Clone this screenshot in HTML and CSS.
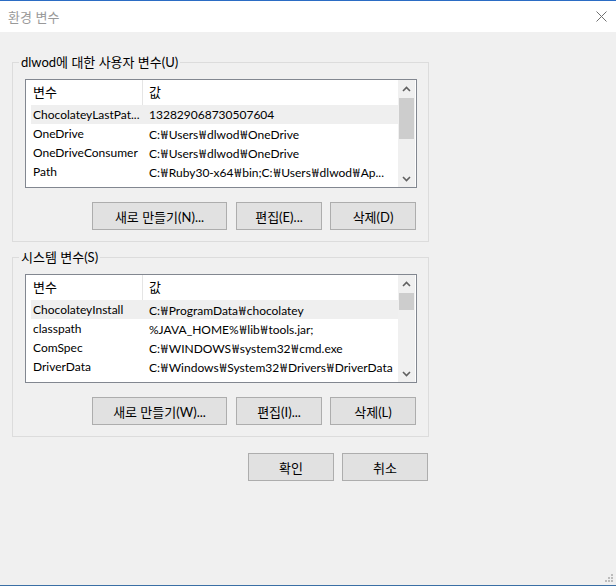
FILE: index.html
```html
<!DOCTYPE html>
<html lang="ko">
<head>
    <meta charset="UTF-8">
    <title>환경 변수</title>
    <link rel="stylesheet" href="styles.css">
</head>
<body>

    <div class="window">
        <div class="titlebar">
            <span class="title">환경 변수</span>
            <svg class="close" width="11" height="11" viewBox="0 0 11 11">
                <path d="M0.5 0.5 L10.5 10.5 M10.5 0.5 L0.5 10.5" stroke="#707070" stroke-width="1" fill="none"/>
            </svg>
        </div>

        <div class="content">
            <!-- 사용자 변수 -->
            <fieldset class="group">
                <legend>dlwod에 대한 사용자 변수(U)</legend>
                <div class="listview">
                    <div class="list-main">
                        <div class="list-header">
                            <div class="col-name">변수</div>
                            <div class="col-value">값</div>
                        </div>
                        <div class="row selected">
                            <div class="col-name">ChocolateyLastPat...</div>
                            <div class="col-value">132829068730507604</div>
                        </div>
                        <div class="row">
                            <div class="col-name">OneDrive</div>
                            <div class="col-value">C:<span class="won">₩</span>Users<span class="won">₩</span>dlwod<span class="won">₩</span>OneDrive</div>
                        </div>
                        <div class="row">
                            <div class="col-name">OneDriveConsumer</div>
                            <div class="col-value">C:<span class="won">₩</span>Users<span class="won">₩</span>dlwod<span class="won">₩</span>OneDrive</div>
                        </div>
                        <div class="row">
                            <div class="col-name">Path</div>
                            <div class="col-value">C:<span class="won">₩</span>Ruby30-x64<span class="won">₩</span>bin;C:<span class="won">₩</span>Users<span class="won">₩</span>dlwod<span class="won">₩</span>Ap...</div>
                        </div>
                    </div>
                    <div class="scrollbar">
                        <div class="arrow">
                            <svg width="9" height="6" viewBox="0 0 9 6"><polyline points="1,5 4.5,1.5 8,5" fill="none" stroke="#606060" stroke-width="1.6"/></svg>
                        </div>
                        <div class="track">
                            <div class="thumb" style="height: 41px; margin-top: 1px;"></div>
                        </div>
                        <div class="arrow">
                            <svg width="9" height="6" viewBox="0 0 9 6"><polyline points="1,1 4.5,4.5 8,1" fill="none" stroke="#606060" stroke-width="1.6"/></svg>
                        </div>
                    </div>
                </div>
                <div class="buttons">
                    <button class="btn btn-wide">새로 만들기(N)...</button>
                    <button class="btn">편집(E)...</button>
                    <button class="btn">삭제(D)</button>
                </div>
            </fieldset>

            <!-- 시스템 변수 -->
            <fieldset class="group group-system">
                <legend>시스템 변수(S)</legend>
                <div class="listview">
                    <div class="list-main">
                        <div class="list-header">
                            <div class="col-name">변수</div>
                            <div class="col-value">값</div>
                        </div>
                        <div class="row selected">
                            <div class="col-name">ChocolateyInstall</div>
                            <div class="col-value">C:<span class="won">₩</span>ProgramData<span class="won">₩</span>chocolatey</div>
                        </div>
                        <div class="row">
                            <div class="col-name">classpath</div>
                            <div class="col-value">%JAVA_HOME%<span class="won">₩</span>lib<span class="won">₩</span>tools.jar;</div>
                        </div>
                        <div class="row">
                            <div class="col-name">ComSpec</div>
                            <div class="col-value">C:<span class="won">₩</span>WINDOWS<span class="won">₩</span>system32<span class="won">₩</span>cmd.exe</div>
                        </div>
                        <div class="row">
                            <div class="col-name">DriverData</div>
                            <div class="col-value">C:<span class="won">₩</span>Windows<span class="won">₩</span>System32<span class="won">₩</span>Drivers<span class="won">₩</span>DriverData</div>
                        </div>
                        <div class="row">
                            <div class="col-name">JAVA_HOME</div>
                            <div class="col-value">C:<span class="won">₩</span>Program Files<span class="won">₩</span>Java<span class="won">₩</span>jdk-17</div>
                        </div>
                    </div>
                    <div class="scrollbar">
                        <div class="arrow">
                            <svg width="9" height="6" viewBox="0 0 9 6"><polyline points="1,5 4.5,1.5 8,5" fill="none" stroke="#606060" stroke-width="1.6"/></svg>
                        </div>
                        <div class="track">
                            <div class="thumb" style="height: 17px; margin-top: 1px;"></div>
                        </div>
                        <div class="arrow">
                            <svg width="9" height="6" viewBox="0 0 9 6"><polyline points="1,1 4.5,4.5 8,1" fill="none" stroke="#606060" stroke-width="1.6"/></svg>
                        </div>
                    </div>
                </div>
                <div class="buttons">
                    <button class="btn btn-wide">새로 만들기(W)...</button>
                    <button class="btn">편집(I)...</button>
                    <button class="btn">삭제(L)</button>
                </div>
            </fieldset>

            <div class="actions">
                <button class="btn">확인</button>
                <button class="btn">취소</button>
            </div>

            <!-- 크기 조절 손잡이 -->
            <svg class="grip" width="9" height="9" viewBox="0 0 9 9">
                <rect x="6" y="0" width="2" height="2" fill="#bcbcbc"/>
                <rect x="3" y="3" width="2" height="2" fill="#bcbcbc"/>
                <rect x="6" y="3" width="2" height="2" fill="#bcbcbc"/>
                <rect x="0" y="6" width="2" height="2" fill="#bcbcbc"/>
                <rect x="3" y="6" width="2" height="2" fill="#bcbcbc"/>
                <rect x="6" y="6" width="2" height="2" fill="#bcbcbc"/>
            </svg>
        </div>
    </div>

</body>
</html>
```

FILE: styles.css
```css
* {
    margin: 0;
    padding: 0;
    box-sizing: border-box;
}

body {
    font-family: Lato, "Noto Sans CJK KR", sans-serif;
    font-size: 12px;
    color: #000;
    background: #f0f0f0;
}

.window {
    width: 616px;
    height: 586px;
    display: flex;
    flex-direction: column;
    border-top: 1px solid #2b6cc4;
    border-bottom: 1px solid #3a6fa5;
    background: #f0f0f0;
    overflow: hidden;
}

/* 제목 표시줄 */
.titlebar {
    height: 31px;
    flex-shrink: 0;
    background: #fff;
    display: flex;
    align-items: center;
    justify-content: space-between;
    padding: 0 9px 0 8px;
}

.title {
    color: #999;
    font-family: "Noto Sans CJK KR", sans-serif;
    font-size: 13px;
}

.content {
    flex: 1;
    position: relative;
    padding: 22px 0 0 12px;
}

/* 그룹 박스 */
.group {
    width: 417px;
    min-width: 0;
    border: 1px solid #dcdcdc;
    padding: 9px 11px 11px 12px;
}

.group legend {
    margin-left: -6px;
    padding: 0 2px;
    font-size: 13px;
    line-height: 16px;
}

.group-system {
    margin-top: 7px;
}

/* 목록 */
.listview {
    height: 109px;
    border: 1px solid #828790;
    background: #fff;
    display: flex;
    padding-right: 1px;
}

.list-main {
    flex: 1;
    min-width: 0;
    padding-left: 5px;
    overflow: hidden;
}

.list-header, .row {
    display: flex;
    white-space: nowrap;
}

.list-header {
    height: 25px;
    line-height: 24px;
    font-size: 13px;
}

.row {
    height: 19px;
    line-height: 19px;
}

.row.selected {
    background: #efefef;
}

.col-name {
    width: 112px;
    flex-shrink: 0;
    padding-left: 2px;
    overflow: hidden;
}

.list-header .col-name {
    border-right: 1px solid #e5e5e5;
}

.col-value {
    flex: 1;
    min-width: 0;
    padding-left: 6px;
    overflow: hidden;
    text-overflow: ellipsis;
}

/* 경로 구분자 (₩) */
.won {
    font-family: "Noto Sans CJK KR", sans-serif;
    padding: 0 1px;
}

/* 스크롤 막대 */
.scrollbar {
    width: 17px;
    flex-shrink: 0;
    background: #f0f0f0;
    display: flex;
    flex-direction: column;
}

.arrow {
    height: 17px;
    display: flex;
    align-items: center;
    justify-content: center;
}

.track {
    flex: 1;
}

.thumb {
    background: #cdcdcd;
    margin: 0 1px;
}

/* 버튼 */
.buttons, .actions {
    display: flex;
    justify-content: flex-end;
    gap: 8px;
    padding-right: 1px;
}

.buttons {
    margin-top: 14px;
}

.actions {
    width: 417px;
    margin-top: 16px;
}

.btn {
    width: 86px;
    height: 28px;
    background: #e1e1e1;
    border: 1px solid #adadad;
    font-family: Lato, "Noto Sans CJK KR", sans-serif;
    font-size: 13px;
    color: #000;
}

.btn-wide {
    width: 135px;
    margin-right: 1px;
}

.grip {
    position: absolute;
    right: 2px;
    bottom: 2px;
}
```
